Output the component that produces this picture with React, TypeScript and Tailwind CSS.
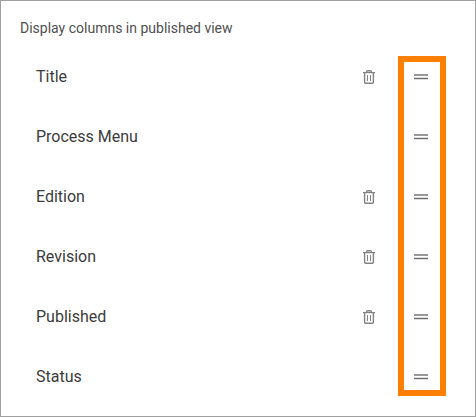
const rows = [
  { name: "Title", removable: true },
  { name: "Process Menu", removable: false },
  { name: "Edition", removable: true },
  { name: "Revision", removable: true },
  { name: "Published", removable: true },
  { name: "Status", removable: false },
];

function Trash() {
  return (
    <svg width="12" height="14" viewBox="0 0 12 14" fill="none" stroke="#838383">
      <path d="M0 2.6H12M3.7 2.5V1.5Q3.7 .7 4.5 .7H7.5Q8.3 .7 8.3 1.5V2.5M1.6 3V12.2Q1.6 13.3 2.7 13.3H9.3Q10.4 13.3 10.4 12.2V3" strokeWidth="1.4" />
      <path d="M4.5 5V11M7.5 5V11" strokeWidth="1.1" />
    </svg>
  );
}

function Handle() {
  return (
    <svg width="14" height="6" viewBox="0 0 14 6" shapeRendering="crispEdges">
      <path d="M0 0H14V2H0Z" fill="#999" />
      <path d="M0 3H14V6H0Z" fill="#ddd" />
      <path d="M0 4H14V5H0Z" fill="#6c6c6c" />
    </svg>
  );
}

export default function App() {
  return (
    <div className="relative h-[417px] w-[476px] border border-[#a0a0a0] bg-white font-['Roboto',sans-serif] text-[#3c3c3c]">
      <h1 className="pl-[19px] pt-[17px] text-sm leading-5 text-[#505050]">Display columns in published view</h1>
      <ul className="mt-[9px]">
        {rows.map((row) => (
          <li key={row.name} className="flex h-[60px] items-center pl-[35px]">
            <span className="w-[327px] text-base">{row.name}</span>
            <span className="w-[51px]">{row.removable && <Trash />}</span>
            <Handle />
          </li>
        ))}
      </ul>
      <div className="pointer-events-none absolute left-[397px] top-[55px] h-[340px] w-12 border-6 border-[#ff8000]" />
    </div>
  );
}
